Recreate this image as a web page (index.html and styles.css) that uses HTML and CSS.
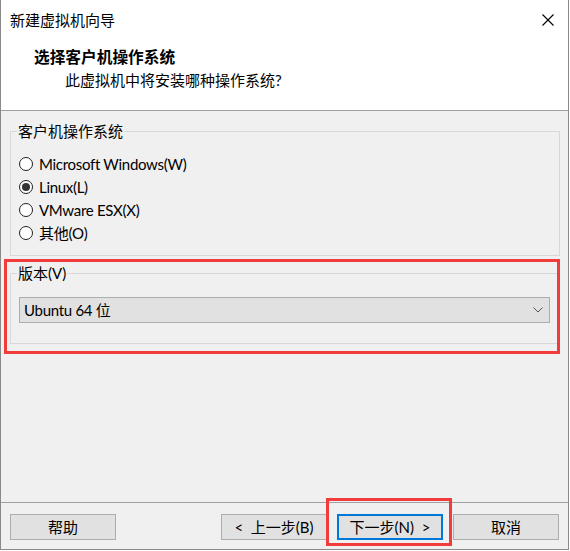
FILE: index.html
```html
<!DOCTYPE html>
<html lang="zh-CN">
<head>
<meta charset="utf-8">
<title>新建虚拟机向导</title>
<link rel="stylesheet" href="styles.css">
</head>
<body>
<div class="window">
  <div class="titlebar">
    <span class="title-text">新建虚拟机向导</span>
    <span class="close" aria-label="关闭">
      <svg width="12" height="12" viewBox="0 0 12 12"><path d="M0.5 0.5 L11.5 11.5 M11.5 0.5 L0.5 11.5" stroke="#000" stroke-width="1.1" fill="none"/></svg>
    </span>
  </div>
  <div class="header">
    <div class="heading">选择客户机操作系统</div>
    <div class="subheading">此虚拟机中将安装哪种操作系统?</div>
  </div>
  <div class="main">
    <fieldset class="group group-os">
      <legend>客户机操作系统</legend>
      <label class="radio"><span class="circle"></span><span class="lbl">Microsoft Windows(W)</span></label>
      <label class="radio"><span class="circle checked"></span><span class="lbl">Linux(L)</span></label>
      <label class="radio"><span class="circle"></span><span class="lbl">VMware ESX(X)</span></label>
      <label class="radio"><span class="circle"></span><span class="lbl">其他(O)</span></label>
    </fieldset>
    <fieldset class="group group-ver">
      <legend>版本(V)</legend>
      <div class="select">
        <span class="lbl">Ubuntu 64 位</span>
        <svg class="chev" width="10" height="6" viewBox="0 0 10 6"><path d="M0.5 0.5 L5 5 L9.5 0.5" stroke="#555" stroke-width="1" fill="none"/></svg>
      </div>
    </fieldset>
    <div class="mark mark-ver"></div>
  </div>
  <div class="footer">
    <button class="btn">帮助</button>
    <div class="spacer"></div>
    <button class="btn">&lt;&nbsp; 上一步(B)</button>
    <div class="next-wrap">
      <button class="btn btn-default">下一步(N)&nbsp; &gt;</button>
      <div class="mark mark-next"></div>
    </div>
    <button class="btn">取消</button>
  </div>
</div>
</body>
</html>
```

FILE: styles.css
```css
* { box-sizing: border-box; }
html, body { margin: 0; padding: 0; background: #ffffff; }
body {
  font-family: Lato, "Noto Sans CJK SC", sans-serif;
  font-size: 15px;
  color: #000;
}
.window {
  width: 569px;
  height: 550px;
  border: 1px solid #8a8a8a;
  border-top: none;
  display: flex;
  flex-direction: column;
  background: #f0f0f0;
}
.titlebar {
  height: 34px;
  background: #ffffff;
  display: flex;
  align-items: center;
  justify-content: space-between;
  padding: 0 14px 0 9px;
  line-height: 20px;
}
.title-text { margin-top: 6px; }
.close { display: flex; margin-top: 6px; }
.header {
  height: 77px;
  background: #ffffff;
  border-bottom: 1px solid #a0a0a0;
  padding: 13px 0 0 33px;
}
.heading {
  font-weight: bold;
  line-height: 20px;
  font-size: 15.7px;
}
.subheading {
  line-height: 20px;
  margin-top: 3px;
  padding-left: 31px;
}
.main {
  flex: 1;
  position: relative;
  padding-top: 10px;
}
.group {
  margin: 0 8px 0 9px;
  border: 1px solid #d8d8d8;
  padding: 0 9px 0 8px;
  min-width: 0;
}
.group legend {
  line-height: 20px;
  padding: 0 1px;
  margin-left: -2px;
}
.group-os { padding-top: 11px; padding-bottom: 11px; }
.group-ver { margin-top: 7px; padding-top: 14px; padding-bottom: 20px; }
.radio {
  display: flex;
  align-items: center;
  height: 23px;
  gap: 6px;
  line-height: 20px;
}
.lbl { letter-spacing: -0.3px; }
.circle {
  width: 14px;
  height: 14px;
  min-width: 14px;
  border: 1px solid #222;
  border-radius: 50%;
  background: #fff;
  display: flex;
  align-items: center;
  justify-content: center;
  flex: none;
}
.circle.checked::after {
  content: "";
  width: 8px;
  height: 8px;
  border-radius: 50%;
  background: #333;
}
.select {
  height: 26px;
  border: 1px solid #adadad;
  background: #e1e1e1;
  display: flex;
  align-items: center;
  justify-content: space-between;
  padding: 0 6px 0 4px;
  line-height: 20px;
}
.mark {
  position: absolute;
  border: 3px solid #f23c3c;
  pointer-events: none;
}
.mark-ver {
  left: 3px;
  top: 148px;
  width: 556px;
  height: 95px;
}
.footer {
  height: 47px;
  border-top: 1px solid #a0a0a0;
  display: flex;
  align-items: flex-start;
  padding: 11px 9px 0 9px;
  gap: 10px;
}
.spacer { flex: 1; }
.btn {
  width: 106px;
  height: 26px;
  border: 1px solid #adadad;
  background: #e1e1e1;
  font-family: inherit;
  font-size: 15px;
  line-height: 20px;
  color: #000;
  padding: 0;
  margin: 0;
}
.btn-default {
  border: 2px solid #0078d7;
}
.next-wrap {
  position: relative;
  display: flex;
}
.mark-next {
  left: -11px;
  top: -16px;
  width: 126px;
  height: 48px;
}
```
